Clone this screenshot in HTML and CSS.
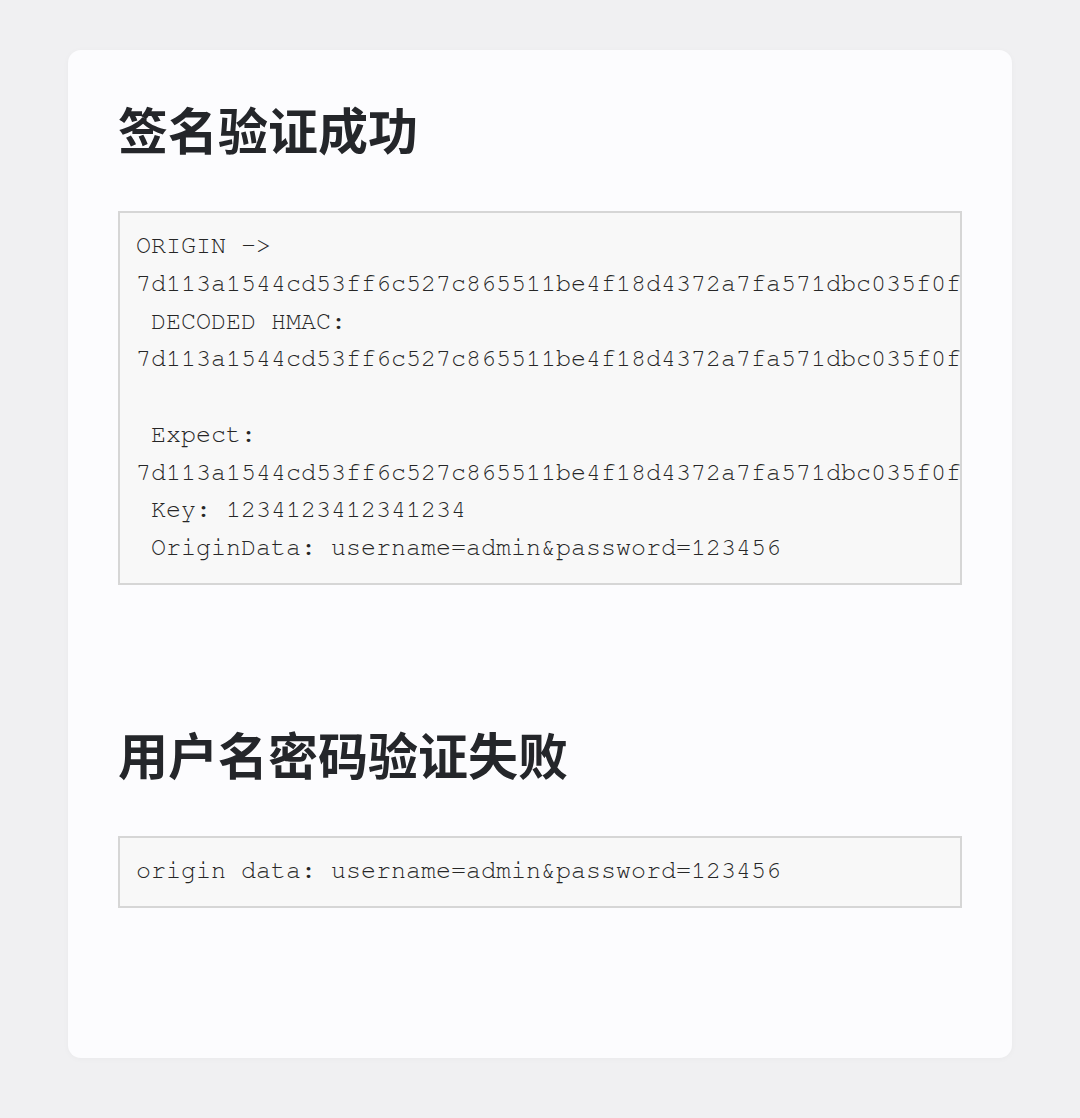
FILE: index.html
```html
<!DOCTYPE html>
<html lang="zh-CN">
<head>
<meta charset="utf-8">
<title>签名验证</title>
<link rel="stylesheet" href="styles.css">
</head>
<body>
<main class="card">
  <section class="block">
    <h2 class="title">签名验证成功</h2>
<pre class="code">ORIGIN -> 
7d113a1544cd53ff6c527c865511be4f18d4372a7fa571dbc035f0f
 DECODED HMAC: 
7d113a1544cd53ff6c527c865511be4f18d4372a7fa571dbc035f0f

 Expect: 
7d113a1544cd53ff6c527c865511be4f18d4372a7fa571dbc035f0f
 Key: 1234123412341234
 OriginData: username=admin&amp;password=123456</pre>
  </section>
  <section class="block">
    <h2 class="title">用户名密码验证失败</h2>
<pre class="code">origin data: username=admin&amp;password=123456</pre>
  </section>
</main>
</body>
</html>
```

FILE: styles.css
```css
html, body {
  margin: 0;
  padding: 0;
  background: #f0f0f2;
}

body {
  padding: 50px 68px 60px;
  font-family: "Noto Sans CJK SC", "Noto Sans", sans-serif;
}

.card {
  background: #fcfcfe;
  border-radius: 13px;
  padding: 46px 50px 150px;
  box-shadow: 0 1px 6px rgba(0, 0, 0, 0.03);
}

.block + .block {
  margin-top: 136px;
}

.title {
  margin: 0 0 50px;
  font-family: "Noto Sans CJK SC", "Noto Sans", sans-serif;
  font-size: 50px;
  font-weight: 700;
  line-height: 1.3;
  color: #24262a;
}

.code {
  margin: 0;
  padding: 14px 16px 16px;
  background: #f8f8f8;
  border: 2px solid #d6d6d6;
  font-family: "Nimbus Mono PS", "Nimbus Mono L", "FreeMono", "Courier", "Liberation Mono", monospace;
  font-size: 25px;
  line-height: 37.75px;
  color: #262626;
  overflow: hidden;
  white-space: pre;
}
```
